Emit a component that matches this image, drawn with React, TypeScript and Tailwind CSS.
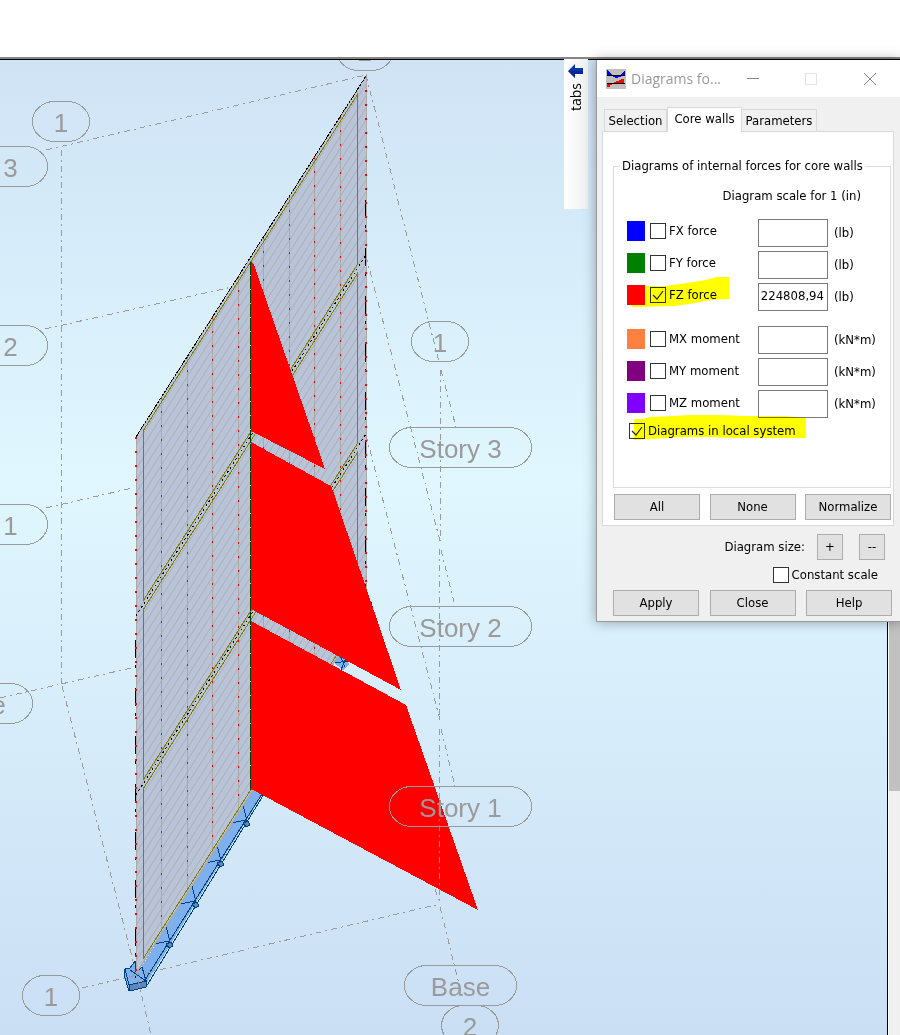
import { useState } from 'react';
import type { ReactNode } from 'react';

type Point = [number, number];

interface ForceRow {
  id: string;
  label: string;
  swatch: string;
  unit: string;
  value: string;
  checked: boolean;
}

const FORCES: ForceRow[] = [
  { id: 'fx', label: 'FX force', swatch: 'bg-[#0000ff]', unit: '(lb)', value: '', checked: false },
  { id: 'fy', label: 'FY force', swatch: 'bg-[#008000]', unit: '(lb)', value: '', checked: false },
  { id: 'fz', label: 'FZ force', swatch: 'bg-[#ff0000]', unit: '(lb)', value: '224808,94', checked: true },
];

const MOMENTS: ForceRow[] = [
  { id: 'mx', label: 'MX moment', swatch: 'bg-[#ff8040]', unit: '(kN*m)', value: '', checked: false },
  { id: 'my', label: 'MY moment', swatch: 'bg-[#800080]', unit: '(kN*m)', value: '', checked: false },
  { id: 'mz', label: 'MZ moment', swatch: 'bg-[#8000ff]', unit: '(kN*m)', value: '', checked: false },
];

// Wall plane: both vertical edges, plus the storey pitch along them.
const LEFT = 136;
const RIGHT = 366;
const MID = 251;
const SLOPE = -361 / 230;
const STOREY = 179;
const wallY = (x: number, level: number) => 437 + (x - LEFT) * SLOPE + level * STOREY;

const GRID_LINES: [Point, Point][] = [
  [[46, 150], [366, 75]],
  [[45, 329], [232, 287]],
  [[46, 508], [132, 488]],
  [[0, 698], [131, 668]],
  [[82, 988], [440, 904]],
  [[61.5, 150], [61.5, 684]],
  [[62, 686], [134, 965]],
  [[138, 980], [151, 1035]],
  [[366, 75], [439, 362]],
  [[366, 256], [440, 541]],
  [[366, 435], [440, 720]],
  [[435, 889], [439, 902]],
  [[440.5, 370], [440.5, 541]],
  [[439.5, 549], [439.5, 720]],
  [[439.5, 729], [439.5, 902]],
  [[441, 370], [456, 427]],
  [[441, 550], [455, 606]],
  [[441, 729], [455, 786]],
  [[440, 907], [463, 1000]],
];

interface Bubble {
  x: number;
  y: number;
  w: number;
  text: string;
}

const BUBBLES: Bubble[] = [
  { x: 336.5, y: 30.5, w: 57, text: '2' },
  { x: 32.5, y: 101.5, w: 57, text: '1' },
  { x: 411.5, y: 321.5, w: 57, text: '1' },
  { x: -94.5, y: 146.5, w: 142, text: 'Story 3' },
  { x: -94.5, y: 325.5, w: 142, text: 'Story 2' },
  { x: -94.5, y: 504.5, w: 142, text: 'Story 1' },
  { x: -80.5, y: 683.5, w: 113, text: 'Base' },
  { x: 22.5, y: 975.5, w: 57, text: '1' },
  { x: 389.5, y: 427.5, w: 142, text: 'Story 3' },
  { x: 389.5, y: 606.5, w: 142, text: 'Story 2' },
  { x: 389.5, y: 786.5, w: 142, text: 'Story 1' },
  { x: 404.5, y: 965.5, w: 112, text: 'Base' },
  { x: 441.5, y: 1005.5, w: 57, text: '2' },
];

const HATCH = Array.from({ length: 72 }, (_, i) => -280 + i * 12);
const STRIPS = [161.5, 187.5, 212.5, 238.5, 263.5, 289.5, 314.5, 340.5];
const SUPPORTS: Point[] = [[246, 821], [220, 861], [195, 902], [169, 942]];

function Wall() {
  const outline = [
    [LEFT, wallY(LEFT, 0)],
    [RIGHT, wallY(RIGHT, 0)],
    [RIGHT, wallY(RIGHT, 3)],
    [LEFT, wallY(LEFT, 3)],
  ].join(' ');

  return (
    <g fill="none">
      <clipPath id="wall">
        <polygon points={outline} />
      </clipPath>
      <polygon points={outline} fill="#b9c4d8" stroke="#a9a9a9" />
      <g clipPath="url(#wall)" stroke="#a9a9a9">
        {HATCH.map((dy) => (
          <line
            key={dy}
            x1={LEFT}
            y1={437 + dy}
            x2={RIGHT}
            y2={437 + dy + (RIGHT - LEFT) * SLOPE}
            shapeRendering="auto"
            strokeWidth="0.8"
          />
        ))}
        {STRIPS.map((x) => (
          <g key={x}>
            <line x1={x} y1={60} x2={x} y2={1000} />
            <line x1={x} y1={wallY(x, 0)} x2={x} y2={1000} stroke="#ff0000" strokeDasharray="2 12" />
          </g>
        ))}
      </g>

      {/* storey joints */}
      {[0, 1, 2].map((level) => (
        <line
          key={level}
          x1={LEFT}
          y1={wallY(LEFT, level)}
          x2={RIGHT}
          y2={wallY(RIGHT, level)}
          stroke="#000"
          strokeDasharray={level === 0 ? '3 1' : '2 3'}
        />
      ))}
      {[0, 1, 2].map((level) => (
        <polygon
          key={level}
          stroke="#808000"
          points={[
            [143.5, wallY(143.5, level) + 5],
            [357.5, wallY(357.5, level) + 5],
            [357.5, wallY(357.5, level + 1) - 4],
            [143.5, wallY(143.5, level + 1) - 4],
          ].join(' ')}
        />
      ))}

      {/* outer edges */}
      <path d="M135.5 640V978M365.5 200V600" stroke="#000" strokeDasharray="18 7 3 20" />
      <path d="M136 437V976M366 76V600" stroke="#ff0000" strokeWidth="2" strokeDasharray="2 12" />
    </g>
  );
}

function Foundation() {
  return (
    <g fill="#7fb0ee" stroke="#003f80">
      <polygon points="136,976 251,790 264,792 146,984 134,990" stroke="none" />
      <path d="M264 794L146 987M262 794L145 980" fill="none" />
      {SUPPORTS.map(([x, y]) => (
        <g key={x}>
          <polygon points={`${x - 3},${y + 2} ${x},${y + 6} ${x + 4},${y + 4} ${x + 2},${y}`} fill="#5c88bc" />
          <path d={`M${x - 15} ${y + 2}L${x} ${y - 1}M${x - 3} ${y - 16}L${x + 1} ${y}`} fill="none" />
        </g>
      ))}
      <polygon points="125,969 130,968 135,961 136,972 142,967 146,981 146,987 129,991 124,975" />
      <polygon points="129,985 146,981 146,987 130,991" fill="#5c88bc" />
      <path d="M125 969L129 985M130 970L146 981" fill="none" />
      {/* far corner, seen between the two lower diagrams */}
      <polygon points="333,662 340,655 350,664 343,670" stroke="none" />
      <path d="M333 663L350 661M340 655L345 667M347 656L340 672" fill="none" />
      <path d="M371 602L373 609" fill="none" />
    </g>
  );
}

function ModelView() {
  return (
    <svg
      viewBox="0 60 887 975"
      preserveAspectRatio="xMinYMin slice"
      shapeRendering="crispEdges"
      className="absolute inset-0 h-full w-full"
      role="img"
      aria-label="Core wall model with FZ diagrams"
    >
      <Foundation />
      <Wall />
      <g fill="#ff0000">
        <polygon points="251,262 254,265 325,469 251,431" />
        <polygon points="251,442 329,485 332,488 401,690 251,609" />
        <polygon points="251,621 406,705 478,910 251,789" />
      </g>
      <line x1={MID - 0.5} y1={262} x2={MID - 0.5} y2={790} stroke="#003c00" strokeDasharray="13 1" />
      <g fill="none" stroke="#9a9a9a">
        {GRID_LINES.map(([a, b]) => (
          <line key={[a, b].join()} x1={a[0]} y1={a[1]} x2={b[0]} y2={b[1]} strokeDasharray="6 4 2 4" />
        ))}
        {BUBBLES.map((b) => (
          <rect key={`${b.x}:${b.y}`} x={b.x} y={b.y} width={b.w} height={40} rx={22} ry={20} />
        ))}
      </g>
      <g fill="#9a9a9a" textAnchor="middle" className="font-['Liberation_Sans',sans-serif] text-[26px]">
        {BUBBLES.map((b) => (
          <text key={`${b.x}:${b.y}`} x={b.x + b.w / 2} y={b.y + 30}>
            {b.text}
          </text>
        ))}
      </g>
    </svg>
  );
}

function CheckBox({ id, label, defaultChecked = false }: { id: string; label: string; defaultChecked?: boolean }) {
  const [checked, setChecked] = useState(defaultChecked);
  return (
    <div className="flex items-center gap-[3px]">
      <span className="grid size-4 shrink-0">
        <input
          id={id}
          type="checkbox"
          checked={checked}
          onChange={(e) => setChecked(e.target.checked)}
          className="col-start-1 row-start-1 size-4 appearance-none border border-[#333] bg-white"
        />
        {checked && (
          <svg viewBox="0 0 16 16" className="pointer-events-none col-start-1 row-start-1 size-4">
            <path d="M3 8l4 4 6-8" fill="none" stroke="#222" strokeWidth="1.2" />
          </svg>
        )}
      </span>
      <label htmlFor={id} className="whitespace-nowrap">
        {label}
      </label>
    </div>
  );
}

function ForceLabels({ rows }: { rows: ForceRow[] }) {
  return (
    <div>
      {rows.map((row) => (
        <div key={row.id} className="flex h-8 items-center gap-[5px]">
          <span className={`h-5 w-[18px] ${row.swatch}`} />
          <CheckBox id={row.id} label={row.label} defaultChecked={row.checked} />
        </div>
      ))}
    </div>
  );
}

function ScaleInputs({ rows }: { rows: ForceRow[] }) {
  return (
    <div>
      {rows.map((row) => (
        <div key={row.id} className="flex h-8 items-center gap-[6px]">
          <input
            type="text"
            aria-label={`${row.label} scale`}
            defaultValue={row.value}
            className="h-7 w-[70px] border border-[#7a7a7a] bg-white pr-[3px] pb-1 text-right"
          />
          <span>{row.unit}</span>
        </div>
      ))}
    </div>
  );
}

function Button({ children, wide = true }: { children: ReactNode; wide?: boolean }) {
  return (
    <button type="button" className={`h-[26px] border border-[#adadad] bg-[#e1e1e1] ${wide ? 'w-[86px]' : 'w-[26px]'}`}>
      {children}
    </button>
  );
}

function TitleBar() {
  return (
    <header className="flex h-[37px] items-center bg-white pl-[9px] text-[#999]">
      <svg viewBox="0 0 20 20" shapeRendering="crispEdges" className="size-5 shrink-0">
        <rect width="20" height="20" fill="#c0c0c0" />
        <path d="M1 1l2 2 2 2 1 1h8l2-2 3-3v5h-3l-2 2h-2v1H9V8H7L5 6H1z" fill="#0000ff" />
        <path d="M1 14h7v1H6v1H4v2H1zM8 14v-1h2v-1h3v-1h2v-1h3v4z" fill="#ff0000" />
        <path d="M1 6h18v1H1zM1 14h18v1H1z" fill="#000" />
      </svg>
      <h1 className="ml-[5px] font-['Open_Sans',sans-serif] text-[14px]">Diagrams fo...</h1>
      <div className="ml-auto flex items-center pr-[23px]">
        <button type="button" aria-label="Minimize" className="flex h-8 w-[58px] items-center justify-center">
          <svg viewBox="0 0 14 14" className="size-[14px]"><path d="M1 6.5h12" stroke="#888" /></svg>
        </button>
        <button type="button" aria-label="Maximize" className="flex h-8 w-[58px] items-center justify-center">
          <svg viewBox="0 0 14 14" className="size-[14px]"><path d="M1.5 1.5h11v11h-11z" fill="none" stroke="#e2e2e2" /></svg>
        </button>
        <button type="button" aria-label="Close window" className="flex h-8 w-[37px] items-center justify-end">
          <svg viewBox="0 0 14 14" className="size-[14px]"><path d="M1 1l12 12M13 1L1 13" fill="none" stroke="#888" /></svg>
        </button>
      </div>
    </header>
  );
}

function DiagramsDialog() {
  return (
    <section
      aria-label="Diagrams for core walls"
      className="absolute top-0 right-0 w-[304px] border-b border-l border-[#999] bg-[#f0f0f0] text-[13px] leading-[18px] text-black shadow-[0_0_12px_rgba(0,0,0,0.35)] font-['DejaVu_Sans_Condensed','DejaVu_Sans',sans-serif]"
    >
      <TitleBar />

      <div role="tablist" className="flex items-end pt-[10px] pl-[7px]">
        <button type="button" role="tab" aria-selected="false" className="h-[22px] w-[63px] border border-b-0 border-[#d9d9d9] whitespace-nowrap">
          Selection
        </button>
        <button type="button" role="tab" aria-selected="true" className="relative -mb-px h-[25px] w-[75px] border border-b-0 border-[#d9d9d9] bg-white pb-[3px] whitespace-nowrap">
          Core walls
        </button>
        <button type="button" role="tab" aria-selected="false" className="h-[22px] w-[75px] border border-b-0 border-l-0 border-[#d9d9d9] whitespace-nowrap">
          Parameters
        </button>
      </div>

      <div className="mr-[6px] ml-[5px] border border-[#d9d9d9] bg-white pt-[25px] pr-[2px] pb-[5px] pl-[10px]">
        <fieldset className="relative min-w-0 border border-[#dcdcdc] pb-12 pl-[13px]">
          <legend className="-ml-[7px] px-[2px] whitespace-nowrap">Diagrams of internal forces for core walls</legend>
          <p className="mt-3 pr-[29px] text-right">Diagram scale for 1 (in)</p>
          <div className="mt-[10px] flex justify-between">
            <div className="flex flex-col gap-3">
              <ForceLabels rows={FORCES} />
              <ForceLabels rows={MOMENTS} />
            </div>
            <div className="flex w-[132px] flex-col gap-[11px] pt-[2px]">
              <ScaleInputs rows={FORCES} />
              <ScaleInputs rows={MOMENTS} />
            </div>
          </div>
          <div className="mt-[3px] flex h-4 items-center pl-[2px]">
            <CheckBox id="local-system" label="Diagrams in local system" defaultChecked />
          </div>
          {/* marker strokes over the active options */}
          <svg viewBox="627 270 180 172" className="pointer-events-none absolute bottom-[45px] left-[13px] h-[172px] w-[180px] mix-blend-multiply">
            <path
              fill="#ffff00"
              d="M646 286h19l15-2 20-3 10-2 6-2h13v22l-19 1-15 3-20 3-42 1-3-2h15zM634 419h9l7-2 23-1 17-1h30l25 1h40l21 2v20h-71l-25-1h-20l-25 1-15 1-16 1z"
            />
          </svg>
        </fieldset>
        <div className="mt-[6px] flex justify-between pl-px">
          <Button>All</Button>
          <Button>None</Button>
          <Button>Normalize</Button>
        </div>
      </div>

      <div className="mt-2 flex items-center justify-end pr-[15px]">
        <span className="mr-3">Diagram size:</span>
        <Button wide={false}>+</Button>
        <span className="w-4" />
        <Button wide={false}>--</Button>
      </div>
      <div className="mt-[7px] flex h-4 items-center justify-end pr-[22px]">
        <CheckBox id="constant-scale" label="Constant scale" />
      </div>
      <div className="mt-[7px] flex justify-between pr-2 pb-[5px] pl-4">
        <Button>Apply</Button>
        <Button>Close</Button>
        <Button>Help</Button>
      </div>
    </section>
  );
}

function TabsHandle() {
  return (
    <button
      type="button"
      className="absolute -top-px right-[312px] flex h-[150px] w-6 flex-col items-center bg-linear-to-r from-white to-[#f0f0f0] pt-1 font-['Open_Sans',sans-serif] text-[14px] leading-4 text-black"
    >
      <svg viewBox="0 0 16 16" className="size-4">
        <path d="M0 8l7-7v4h8v6H7v4z" fill="#0a35b0" />
        <path d="M7 8h8v3H7v4L0 8z" fill="#03207a" opacity="0.6" />
      </svg>
      <span className="mt-1 rotate-180 [writing-mode:vertical-rl]">tabs</span>
    </button>
  );
}

export default function App() {
  return (
    <div className="flex min-h-screen flex-col bg-white">
      <div className="h-[57px] shrink-0 bg-white" />
      <div className="h-[3px] shrink-0 border-b border-black bg-[#858585]" />
      <main className="relative flex min-h-[600px] flex-1">
        <div className="relative flex-1 overflow-hidden border-r border-black bg-linear-to-b from-[#cfe3f5] via-[#e0f7ff] via-43% to-[#cadff4]">
          <ModelView />
        </div>
        <div className="w-3 border-l border-white bg-[#f0f0f0]">
          <div className="h-3/4 bg-[#c1c1c1]" />
        </div>
        <TabsHandle />
        <DiagramsDialog />
      </main>
    </div>
  );
}
